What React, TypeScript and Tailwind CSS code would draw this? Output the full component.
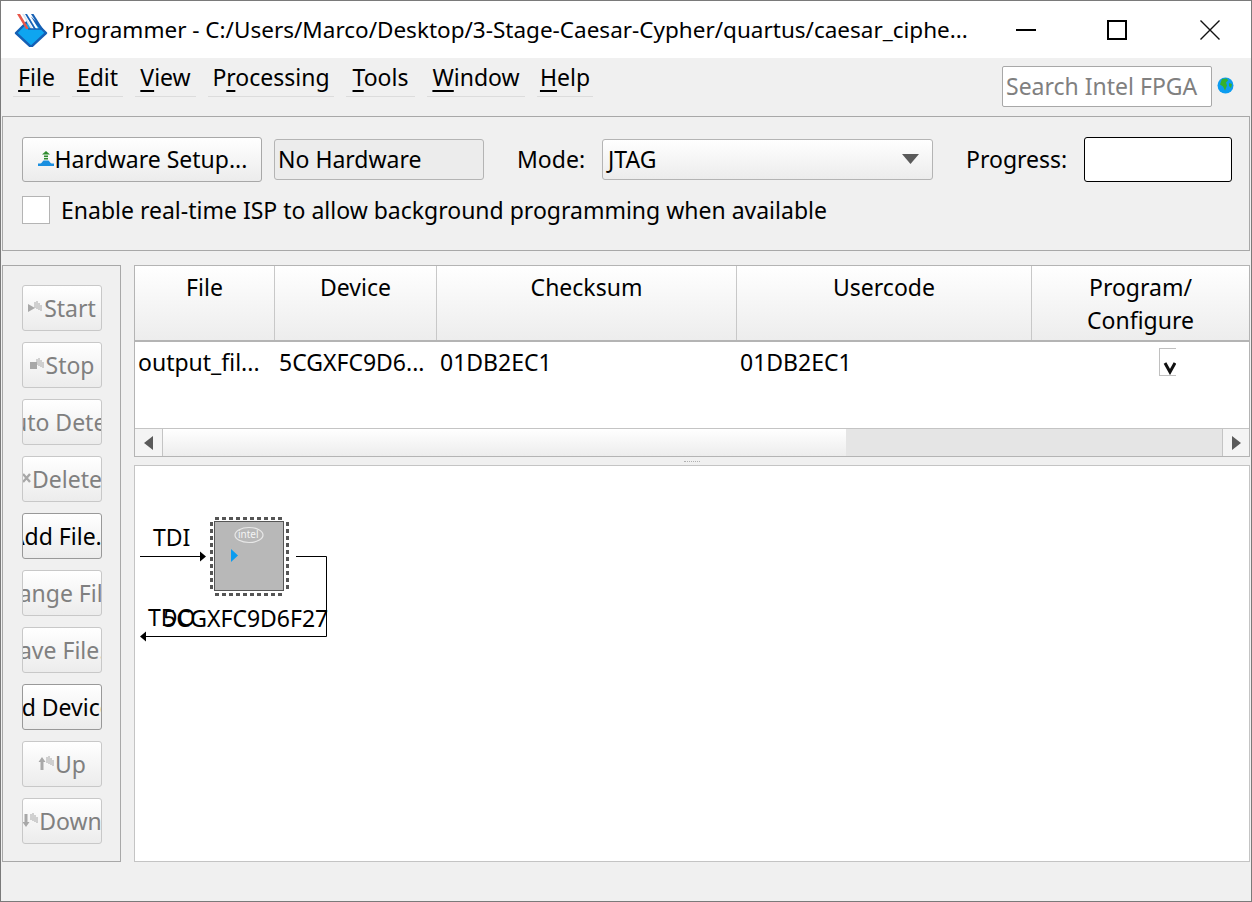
import React from "react";

const Wave = ({ x = 0 }: { x?: number }) => (
  <g stroke="#a8a8a8" strokeWidth="1" fill="none">
    <path d={`M${x} 1v6M${x + 2} 0v8M${x + 4} 2v7M${x + 6} 4v6`} />
  </g>
);

const StartIcon = () => (
  <svg width="16" height="14" viewBox="0 0 16 14" className="shrink-0">
    <path d="M0 3l7 4-7 4z" fill="#a8a8a8" />
    <Wave x={7} />
  </svg>
);
const StopIcon = () => (
  <svg width="16" height="14" viewBox="0 0 16 14" className="shrink-0">
    <rect x="0" y="4" width="7" height="7" fill="#a8a8a8" />
    <Wave x={7} />
  </svg>
);
const DeleteIcon = () => (
  <svg width="10" height="14" viewBox="0 0 10 14" className="shrink-0">
    <path d="M1 2l7 8M8 2l-7 8" stroke="#a8a8a8" strokeWidth="2.4" fill="none" />
  </svg>
);
const UpIcon = () => (
  <svg width="17" height="16" viewBox="0 0 17 16" className="shrink-0">
    <path d="M4 1l3.5 5H5.5v8h-3V6H.5z" fill="#a8a8a8" />
    <Wave x={9} />
  </svg>
);
const DownIcon = () => (
  <svg width="17" height="16" viewBox="0 0 17 16" className="shrink-0">
    <path d="M4 14l3.5-5H5.5V1h-3v8H.5z" fill="#a8a8a8" />
    <Wave x={9} />
  </svg>
);

const Logo = () => (
  <svg width="34" height="34" viewBox="0 0 34 34" className="shrink-0">
    <path d="M2 20 L17 5 L32 20 L17 34 Z" fill="#0ea5f0" stroke="#1560b5" strokeWidth="2.4" strokeLinejoin="round" />
    <path d="M8 13h24" stroke="#1560b5" strokeWidth="0" />
    <path d="M9 1l9 15h4L13 1z" fill="#ffffff" />
    <path d="M3 1h3l9 15h-3z" fill="#e8574a" />
    <path d="M13 1h2.5l9 15H22z" fill="#ffffff" />
    <path d="M11 1h2l9 15h-2z" fill="#1560b5" />
    <path d="M8 1h2l9 15h-2z" fill="#d8e4f0" />
    <path d="M17 1h2.5L29 16h-2.5z" fill="#1560b5" />
    <path d="M14 16h15" stroke="#1560b5" strokeWidth="1.5" />
  </svg>
);

const Globe = () => (
  <svg width="17" height="17" viewBox="0 0 17 17">
    <circle cx="8.5" cy="8.5" r="8" fill="#0c9cf0" />
    <path d="M5 2l5-.5 1 2-2 2 1 3-2 5-2-4-3-2z" fill="#36b02c" />
    <path d="M12 6l3 1-1 4-2-2z" fill="#36b02c" />
  </svg>
);

const HwIcon = () => (
  <svg width="18" height="16" viewBox="0 0 18 16" className="shrink-0">
    <path d="M9 0l4 3.5H5z" fill="#2e8b2e" />
    <rect x="7" y="4.5" width="4" height="1.6" fill="#2e8b2e" />
    <rect x="7" y="7" width="4" height="1.5" fill="#2e8b2e" />
    <path d="M3.5 13 L6.5 9.5h5l3 3.5z" fill="#1a8fe0" />
    <rect x="1" y="12.5" width="16" height="2.5" fill="#1a8fe0" />
  </svg>
);

const MenuItem = ({ pre, u, post, w }: { pre?: string; u: string; post: string; w: string }) => (
  <div className={`h-[38px] flex items-center justify-center border-b border-[#dcdcdc] ${w}`}>
    <span>
      {pre}
      <span className="underline underline-offset-[4px]">{u}</span>
      {post}
    </span>
  </div>
);

const SideButton = ({ label, icon, on }: { label: string; icon?: React.ReactNode; on?: boolean }) => (
  <div
    className={`w-20 h-[46px] shrink-0 rounded-[3px] border overflow-hidden flex items-center justify-center whitespace-nowrap bg-gradient-to-b from-white to-[#ececec] ${
      on ? "border-[#999999] text-black" : "border-[#c8c8c8] text-[#808080]"
    }`}
  >
    {icon}
    <span className="shrink-0">{label}</span>
  </div>
);

const HeaderCell = ({ w, children }: { w: string; children: React.ReactNode }) => (
  <div className={`${w} shrink-0 h-full border-r border-[#c8c8c8] text-center pt-[5px] leading-[33px]`}>{children}</div>
);

export default function App() {
  return (
    <div className="w-[1252px] h-[902px] overflow-hidden flex flex-col bg-[#f0f0f0] text-black border border-[#7a7a7a] text-[23px] font-['Noto_Sans','Open_Sans',sans-serif]">
      {/* title bar */}
      <div className="h-[57px] shrink-0 bg-white flex items-center pl-[13px]">
        <Logo />
        <span className="ml-[3px] whitespace-nowrap text-[22.5px] w-[925px] overflow-hidden">
          Programmer - C:/Users/Marco/Desktop/3-Stage-Caesar-Cypher/quartus/caesar_ciphe...
        </span>
        <div className="ml-[40px] w-[20px] h-[2px] bg-black" />
        <div className="ml-[71px] w-[20px] h-[20px] border-2 border-black" />
        <svg width="20" height="20" viewBox="0 0 20 20" className="ml-[73px]">
          <path d="M.5.5l19 19M19.5.5l-19 19" stroke="#111" strokeWidth="1.4" fill="none" />
        </svg>
      </div>

      {/* menu */}
      <div className="h-[58px] shrink-0 flex items-start pl-[12px] pr-[12px]">
        <div className="flex gap-[12px] mt-[1px]">
          <MenuItem u="F" post="ile" w="w-[47px]" />
          <MenuItem u="E" post="dit" w="w-[51px]" />
          <MenuItem u="V" post="iew" w="w-[61px]" />
          <MenuItem pre="P" u="r" post="ocessing" w="w-[126px]" />
          <MenuItem u="T" post="ools" w="w-[69px]" />
          <MenuItem u="W" post="indow" w="w-[98px]" />
          <MenuItem u="H" post="elp" w="w-[56px]" />
        </div>
        <div className="ml-[409px] mt-[8px] w-[210px] h-[41px] bg-white border border-[#a8a8a8] rounded-[2px] text-[#808080] flex items-center pl-[3px] whitespace-nowrap overflow-hidden">
          Search Intel FPGA
        </div>
        <div className="ml-[5px] mt-[19px]">
          <Globe />
        </div>
      </div>

      {/* top group */}
      <div className="h-[135px] shrink-0 mx-[1px] border border-[#a8a8a8] pl-[19px] pt-[19px]">
        <div className="flex items-center h-[46px]">
          <div className="w-[240px] h-[45px] rounded-[3px] border border-[#a8a8a8] bg-gradient-to-b from-white to-[#ececec] flex items-center justify-center whitespace-nowrap">
            <HwIcon />
            <span>Hardware Setup...</span>
          </div>
          <div className="ml-[12px] w-[210px] h-[41px] rounded-[3px] border border-[#b4b4b4] bg-[#ececec] flex items-center pl-[3px]">
            No Hardware
          </div>
          <span className="ml-[33px]">Mode:</span>
          <div className="ml-[17px] w-[331px] h-[41px] rounded-[3px] border border-[#b4b4b4] bg-gradient-to-b from-white to-[#ececec] flex items-center justify-between pl-[5px] pr-[13px]">
            <span>JTAG</span>
            <svg width="17" height="10" viewBox="0 0 17 10">
              <path d="M0 0h17l-8.5 10z" fill="#5a5a5a" />
            </svg>
          </div>
          <span className="ml-[33px]">Progress:</span>
          <div className="ml-[17px] w-[148px] h-[45px] rounded-[3px] border border-black bg-white" />
        </div>
        <div className="flex items-center mt-[11px]">
          <div className="w-[28px] h-[28px] bg-white border border-[#b4b4b4]" />
          <span className="ml-[11px] whitespace-nowrap">Enable real-time ISP to allow background programming when available</span>
        </div>
      </div>

      {/* main */}
      <div className="flex mt-[14px] h-[597px] shrink-0 mx-[1px]">
        <div className="w-[119px] shrink-0 h-full border border-[#a8a8a8] pl-[19px] pt-[19px] flex flex-col gap-[11px]">
          <SideButton label="Start" icon={<StartIcon />} />
          <SideButton label="Stop" icon={<StopIcon />} />
          <SideButton label="Auto Detect" />
          <SideButton label="Delete" icon={<DeleteIcon />} />
          <SideButton label="Add File..." on />
          <SideButton label="Change File..." />
          <SideButton label="Save File..." />
          <SideButton label="Add Device..." on />
          <SideButton label="Up" icon={<UpIcon />} />
          <SideButton label="Down" icon={<DownIcon />} />
        </div>

        <div className="ml-[13px] flex-1 min-w-0 flex flex-col h-full">
          {/* table */}
          <div className="h-[192px] shrink-0 border border-[#b4b4b4] flex flex-col bg-white">
            <div className="h-[76px] shrink-0 flex border-b-2 border-[#b4b4b4] bg-gradient-to-b from-white to-[#ededed]">
              <HeaderCell w="w-[140px]">File</HeaderCell>
              <HeaderCell w="w-[162px]">Device</HeaderCell>
              <HeaderCell w="w-[300px]">Checksum</HeaderCell>
              <HeaderCell w="w-[295px]">Usercode</HeaderCell>
              <div className="flex-1 text-center pt-[5px] leading-[33px]">
                Program/
                <br />
                Configure
              </div>
            </div>
            <div className="flex-1 flex bg-white pt-[3px]">
              <div className="w-[140px] pl-[3px] whitespace-nowrap">output_fil...</div>
              <div className="w-[162px] pl-[4px] whitespace-nowrap">5CGXFC9D6...</div>
              <div className="w-[300px] pl-[3px]">01DB2EC1</div>
              <div className="w-[295px] pl-[3px]">01DB2EC1</div>
              <div className="flex-1 pl-[127px] pt-[3px]">
                <div className="w-[17px] h-[28px] border border-r-0 border-[#c0c0c0] overflow-hidden">
                  <svg width="16" height="26" viewBox="0 0 16 26">
                    <path d="M5 14l5 9 5-9" stroke="#111" strokeWidth="3" fill="none" />
                  </svg>
                </div>
              </div>
            </div>
            {/* scrollbar */}
            <div className="h-[28px] shrink-0 border-t border-[#c4c4c4] flex bg-[#e5e5e5]">
              <div className="w-[28px] border-r border-[#c4c4c4] bg-[#f4f4f4] flex items-center justify-center">
                <svg width="9" height="14" viewBox="0 0 9 14">
                  <path d="M9 0v14L0 7z" fill="#5a5a5a" />
                </svg>
              </div>
              <div className="w-[683px] bg-gradient-to-b from-white to-[#ededed]" />
              <div className="flex-1" />
              <div className="w-[27px] border-l border-[#c4c4c4] bg-[#f4f4f4] flex items-center justify-center">
                <svg width="9" height="14" viewBox="0 0 9 14">
                  <path d="M0 0v14l9-7z" fill="#5a5a5a" />
                </svg>
              </div>
            </div>
          </div>
          {/* splitter */}
          <div className="h-[8px] shrink-0 flex items-center justify-center">
            <div className="w-[16px] border-t border-dotted border-[#b0b0b0]" />
          </div>
          {/* chain */}
          <div className="flex-1 min-h-0 border border-[#c4c4c4] bg-white relative overflow-hidden">
            <span className="absolute left-[18px] top-[55px] leading-[32px]">TDI</span>
            <span className="absolute left-[13px] top-[135px] leading-[32px]">TDO</span>
            <span className="absolute left-[28px] top-[136px] leading-[32px] whitespace-nowrap">5CGXFC9D6F27</span>
            <svg width="220" height="150" viewBox="0 0 220 150" className="absolute left-0 top-[36px]">
              <path d="M5 54.5h60" stroke="#000" fill="none" />
              <path d="M71 54.5l-6-5v10z" fill="#000" />
              <path d="M161 54.5h30.5v80H10" stroke="#000" fill="none" />
              <path d="M5 134.5l6-5v10z" fill="#000" />
              <rect x="79.5" y="19.5" width="69" height="69" fill="#b8b8b8" stroke="#555" />
              <g fill="#555">
                {[0, 1, 2, 3, 4, 5, 6, 7, 8, 9].map((i) => (
                  <React.Fragment key={i}>
                    <rect x={80 + i * 7} y="15" width="4" height="3" />
                    <rect x={80 + i * 7} y="91" width="4" height="3" />
                    <rect x="75" y={20 + i * 7} width="3" height="4" />
                    <rect x="151" y={20 + i * 7} width="3" height="4" />
                  </React.Fragment>
                ))}
              </g>
              <path d="M96 47l7 6.500-7 6.500z" fill="#0a9cf0" />
              <ellipse cx="114" cy="33" rx="14" ry="7.500" fill="none" stroke="#e8e8e8" strokeWidth="1.2" />
              <text x="103" y="36" fontSize="10" fill="#f4f4f4" fontFamily="Noto Sans, sans-serif">intel</text>
            </svg>
          </div>
        </div>
      </div>
    </div>
  );
}
